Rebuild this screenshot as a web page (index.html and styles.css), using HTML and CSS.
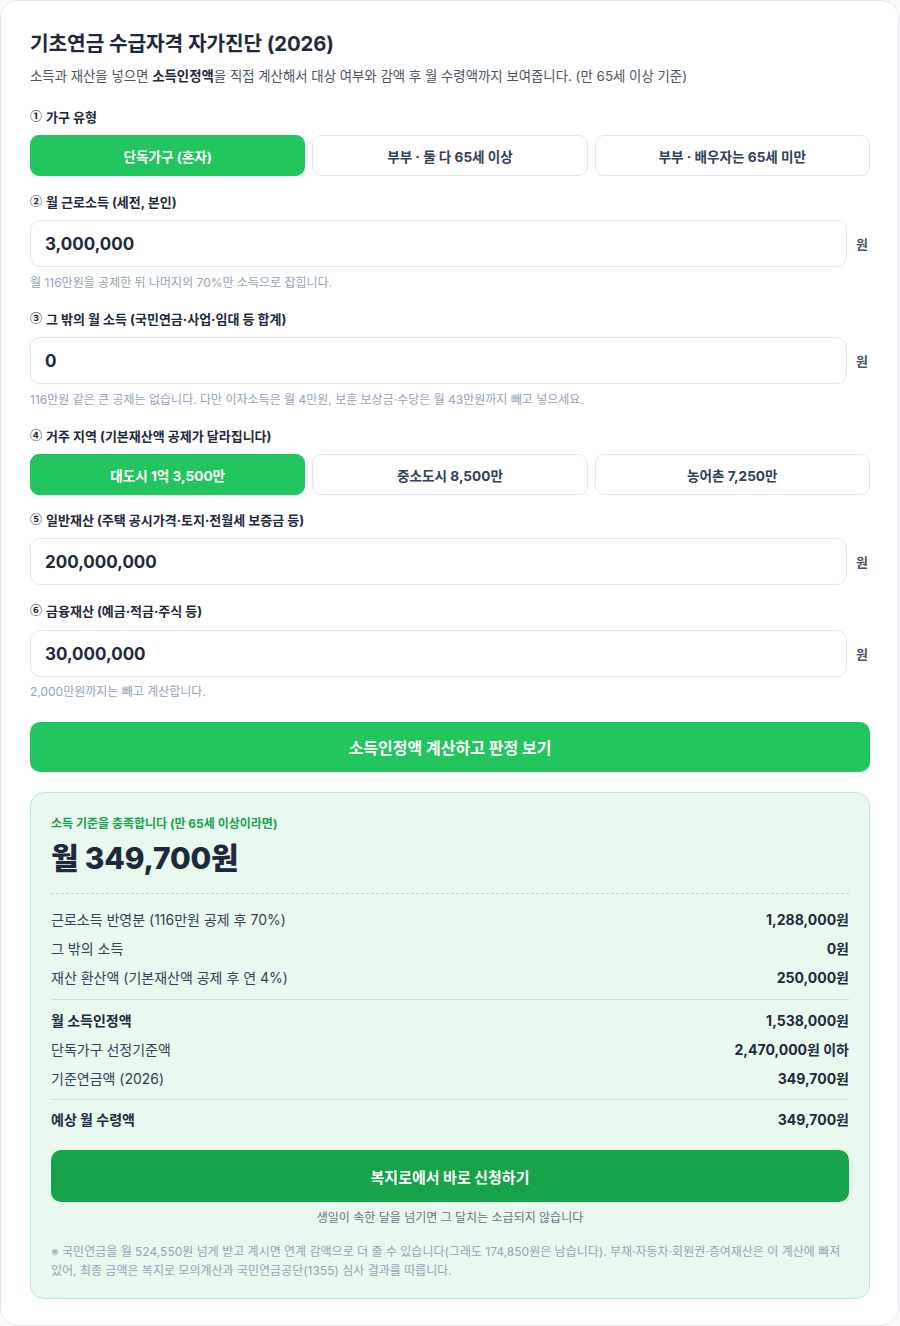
FILE: index.html
```html
<!DOCTYPE html>
<html lang="ko">
<head>
<meta charset="utf-8">
<title>기초연금 수급자격 자가진단 (2026)</title>
<link rel="stylesheet" href="styles.css">
</head>
<body>
<main class="card">
  <h1 class="title">기초연금 수급자격 자가진단 (2026)</h1>
  <p class="subtitle">소득과 재산을 넣으면 <strong>소득인정액</strong>을 직접 계산해서 대상 여부와 감액 후 월 수령액까지 보여줍니다. (만 65세 이상 기준)</p>

  <section class="field">
    <div class="label"><span class="num">①</span><span>가구 유형</span></div>
    <div class="toggles">
      <button class="toggle active">단독가구 (혼자)</button>
      <button class="toggle">부부 · 둘 다 65세 이상</button>
      <button class="toggle">부부 · 배우자는 65세 미만</button>
    </div>
  </section>

  <section class="field">
    <div class="label"><span class="num">②</span><span>월 근로소득 (세전, 본인)</span></div>
    <div class="input-row">
      <div class="input">3,000,000</div>
      <span class="unit">원</span>
    </div>
    <p class="hint">월 116만원을 공제한 뒤 나머지의 70%만 소득으로 잡힙니다.</p>
  </section>

  <section class="field after-hint">
    <div class="label"><span class="num">③</span><span>그 밖의 월 소득 (국민연금·사업·임대 등 합계)</span></div>
    <div class="input-row">
      <div class="input">0</div>
      <span class="unit">원</span>
    </div>
    <p class="hint">116만원 같은 큰 공제는 없습니다. 다만 이자소득은 월 4만원, 보훈 보상금·수당은 월 43만원까지 빼고 넣으세요.</p>
  </section>

  <section class="field after-hint">
    <div class="label"><span class="num">④</span><span>거주 지역 (기본재산액 공제가 달라집니다)</span></div>
    <div class="toggles">
      <button class="toggle active">대도시 1억 3,500만</button>
      <button class="toggle">중소도시 8,500만</button>
      <button class="toggle">농어촌 7,250만</button>
    </div>
  </section>

  <section class="field after-toggles">
    <div class="label"><span class="num">⑤</span><span>일반재산 (주택 공시가격·토지·전월세 보증금 등)</span></div>
    <div class="input-row">
      <div class="input">200,000,000</div>
      <span class="unit">원</span>
    </div>
  </section>

  <section class="field">
    <div class="label label-6"><span class="num">⑥</span><span>금융재산 (예금·적금·주식 등)</span></div>
    <div class="input-row">
      <div class="input">30,000,000</div>
      <span class="unit">원</span>
    </div>
    <p class="hint hint-tight">2,000만원까지는 빼고 계산합니다.</p>
  </section>

  <button class="primary">소득인정액 계산하고 판정 보기</button>

  <section class="result">
    <div class="status">소득 기준을 충족합니다 (만 65세 이상이라면)</div>
    <div class="amount">월 349,700원</div>

    <div class="group group-dashed">
      <div class="row"><span>근로소득 반영분 (116만원 공제 후 70%)</span><b>1,288,000원</b></div>
      <div class="row"><span>그 밖의 소득</span><b>0원</b></div>
      <div class="row"><span>재산 환산액 (기본재산액 공제 후 연 4%)</span><b>250,000원</b></div>
    </div>
    <div class="group group-solid">
      <div class="row strong"><span>월 소득인정액</span><b>1,538,000원</b></div>
      <div class="row"><span>단독가구 선정기준액</span><b>2,470,000원 이하</b></div>
      <div class="row"><span>기준연금액 (2026)</span><b>349,700원</b></div>
    </div>
    <div class="group group-solid group-last">
      <div class="row strong"><span>예상 월 수령액</span><b>349,700원</b></div>
    </div>

    <button class="apply">복지로에서 바로 신청하기</button>
    <p class="apply-note">생일이 속한 달을 넘기면 그 달치는 소급되지 않습니다</p>
    <p class="footnote">※ 국민연금을 월 524,550원 넘게 받고 계시면 연계 감액으로 더 줄 수 있습니다(그래도 174,850원은 남습니다). 부채·자동차·회원권·증여재산은 이 계산에 빠져 있어, 최종 금액은 복지로 모의계산과 국민연금공단(1355) 심사 결과를 따릅니다.</p>
  </section>
</main>
</body>
</html>
```

FILE: styles.css
```css
* { box-sizing: border-box; }

html, body {
  margin: 0;
  padding: 0;
  background: #f8fafc;
}

body {
  font-family: "Inter", "Noto Sans CJK KR", sans-serif;
  color: #1e293b;
}

.card {
  width: 899px;
  min-height: 1325px;
  background: #ffffff;
  border: 1px solid #e5e7eb;
  border-radius: 18px;
  padding: 30px 28px 26px 29px;
  display: flex;
  flex-direction: column;
}

.title {
  margin: 0;
  font-size: 20.3px;
  line-height: 26px;
  font-weight: 700;
  color: #1e293b;
  letter-spacing: -0.1px;
}

.subtitle {
  margin: 9px 0 0;
  font-size: 13.4px;
  line-height: 20px;
  color: #4b5563;
}

.subtitle strong {
  color: #1e293b;
  font-weight: 700;
}

.field {
  margin-top: 15px;
  display: flex;
  flex-direction: column;
}

.subtitle + .field { margin-top: 20px; }
.field.after-hint { margin-top: 17px; }
.field.after-toggles { margin-top: 14px; }

.label {
  display: flex;
  align-items: center;
  gap: 4px;
  height: 20px;
  font-size: 13px;
  line-height: 20px;
  font-weight: 700;
  color: #1e293b;
  margin-bottom: 9px;
  position: relative;
  top: 1px;
}

.num {
  font-family: "Noto Sans CJK KR", sans-serif;
  font-size: 12px;
  line-height: 20px;
  font-weight: 700;
  position: relative;
  top: -1px;
}

.label-6 { margin-bottom: 10px; }

.toggles {
  display: grid;
  grid-template-columns: repeat(3, 1fr);
  gap: 7px;
}

.toggle {
  height: 41px;
  border: 1px solid #e2e8f0;
  border-radius: 9px;
  background: #ffffff;
  font-family: inherit;
  font-size: 13.6px;
  font-weight: 700;
  color: #334155;
  padding: 0;
}

.toggle.active {
  background: #22c55e;
  border-color: #22c55e;
  color: #ffffff;
}

.input-row {
  display: flex;
  align-items: center;
  gap: 9px;
}

.input {
  flex: 1;
  height: 47px;
  border: 1px solid #e2e8f0;
  border-radius: 10px;
  background: #ffffff;
  padding: 0 14px;
  display: flex;
  align-items: center;
  font-size: 17px;
  font-weight: 700;
  color: #1e293b;
}

.unit {
  width: 14px;
  font-size: 13px;
  font-weight: 700;
  color: #475569;
}

.hint {
  margin: 7px 0 0;
  font-size: 12px;
  line-height: 18px;
  color: #94a3b8;
}

.field.after-hint { margin-top: 16px; }

.hint-tight { margin-top: 6px; }

.primary {
  margin-top: 21px;
  height: 50px;
  border: 0;
  border-radius: 10px;
  background: #22c55e;
  color: #ffffff;
  font-family: inherit;
  font-size: 16px;
  font-weight: 700;
}

.result {
  margin-top: 20px;
  background: #e9f9ef;
  border: 1px solid #b9ebcb;
  border-radius: 14px;
  padding: 22px 20px 18px;
  display: flex;
  flex-direction: column;
}

.status {
  font-size: 12px;
  line-height: 18px;
  font-weight: 700;
  color: #16a34a;
}

.amount {
  margin-top: 6px;
  font-size: 30px;
  line-height: 38px;
  font-weight: 800;
  color: #1e293b;
  letter-spacing: -0.2px;
}

.group-dashed {
  margin-top: 16px;
  border-top: 1px dashed #a7e3bf;
  padding: 10px 0 8px;
}

.group-solid {
  border-top: 1.5px solid #b9ebcb;
  padding: 5px 0 7px;
}

.group-last { padding: 4px 0 0; }

.row {
  display: flex;
  justify-content: space-between;
  align-items: center;
  height: 29px;
  font-size: 14px;
  color: #334155;
}

.row b {
  font-weight: 700;
  color: #1e293b;
}

.row.strong span {
  font-weight: 700;
  color: #1e293b;
}

.apply {
  margin-top: 17px;
  height: 52px;
  border: 0;
  border-radius: 10px;
  background: #16a34a;
  color: #ffffff;
  font-family: inherit;
  font-size: 15px;
  font-weight: 700;
}

.apply-note {
  margin: 7px 0 0;
  text-align: center;
  font-size: 12px;
  line-height: 18px;
  color: #6b7280;
}

.footnote {
  margin: 15px 0 0;
  font-size: 12px;
  line-height: 19px;
  color: #94a3b8;
  word-break: keep-all;
}
```
